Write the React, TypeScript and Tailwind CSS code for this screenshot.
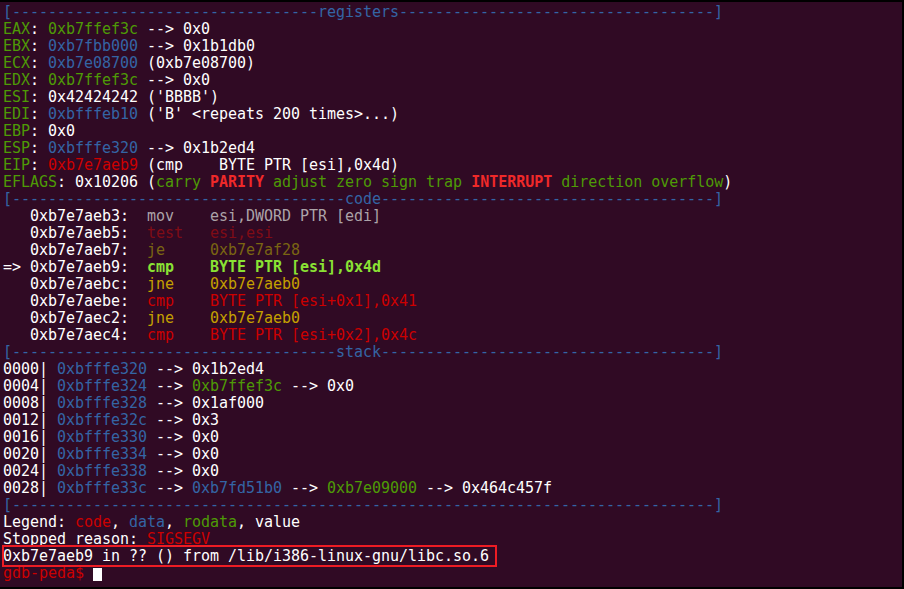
import React from "react";

type Seg = [string, string];

const W = "text-white";
const G = "text-[#4e9a06]";
const B = "text-[#3465a4]";
const R = "text-[#cc0000]";
const Y = "text-[#c4a000]";
const BR = "text-[#ef2929] font-bold";
const BG = "text-[#8ae234] font-bold";
const DW = "text-[#aca3a8]";
const DR = "text-[#800c16]";
const DY = "text-[#7a6512]";

const header = (t: string): Seg[] => {
  const total = 78 - t.length;
  const left = Math.floor(total / 2);
  const right = total - left;
  return [["[" + "-".repeat(left) + t + "-".repeat(right) + "]", B]];
};

const lines: Seg[][] = [
  header("registers"),
  [["EAX", G], [": ", W], ["0xb7ffef3c", G], [" --> 0x0", W]],
  [["EBX", G], [": ", W], ["0xb7fbb000", B], [" --> 0x1b1db0", W]],
  [["ECX", G], [": ", W], ["0xb7e08700", B], [" (0xb7e08700)", W]],
  [["EDX", G], [": ", W], ["0xb7ffef3c", G], [" --> 0x0", W]],
  [["ESI", G], [": 0x42424242 ('BBBB')", W]],
  [["EDI", G], [": ", W], ["0xbfffeb10", B], [" ('B' <repeats 200 times>...)", W]],
  [["EBP", G], [": 0x0", W]],
  [["ESP", G], [": ", W], ["0xbfffe320", B], [" --> 0x1b2ed4", W]],
  [["EIP", G], [": ", W], ["0xb7e7aeb9", R], [" (cmp    BYTE PTR [esi],0x4d)", W]],
  [
    ["EFLAGS", G],
    [": 0x10206 (", W],
    ["carry", G],
    [" ", W],
    ["PARITY", BR],
    [" ", W],
    ["adjust zero sign trap", G],
    [" ", W],
    ["INTERRUPT", BR],
    [" ", W],
    ["direction overflow", G],
    [")", W],
  ],
  header("code"),
  [["   0xb7e7aeb3:  ", W], ["mov    esi,DWORD PTR [edi]", DW]],
  [["   0xb7e7aeb5:  ", W], ["test   esi,esi", DR]],
  [["   0xb7e7aeb7:  ", W], ["je     0xb7e7af28", DY]],
  [["=> 0xb7e7aeb9:  ", W], ["cmp    BYTE PTR [esi],0x4d", BG]],
  [["   0xb7e7aebc:  ", W], ["jne    0xb7e7aeb0", Y]],
  [["   0xb7e7aebe:  ", W], ["cmp    BYTE PTR [esi+0x1],0x41", R]],
  [["   0xb7e7aec2:  ", W], ["jne    0xb7e7aeb0", Y]],
  [["   0xb7e7aec4:  ", W], ["cmp    BYTE PTR [esi+0x2],0x4c", R]],
  header("stack"),
  [["0000| ", W], ["0xbfffe320", B], [" --> 0x1b2ed4", W]],
  [["0004| ", W], ["0xbfffe324", B], [" --> ", W], ["0xb7ffef3c", G], [" --> 0x0", W]],
  [["0008| ", W], ["0xbfffe328", B], [" --> 0x1af000", W]],
  [["0012| ", W], ["0xbfffe32c", B], [" --> 0x3", W]],
  [["0016| ", W], ["0xbfffe330", B], [" --> 0x0", W]],
  [["0020| ", W], ["0xbfffe334", B], [" --> 0x0", W]],
  [["0024| ", W], ["0xbfffe338", B], [" --> 0x0", W]],
  [
    ["0028| ", W],
    ["0xbfffe33c", B],
    [" --> ", W],
    ["0xb7fd51b0", B],
    [" --> ", W],
    ["0xb7e09000", G],
    [" --> 0x464c457f", W],
  ],
  [["[" + "-".repeat(78) + "]", B]],
  [["Legend: ", W], ["code", R], [", ", W], ["data", B], [", ", W], ["rodata", G], [", value", W]],
  [["Stopped reason: ", W], ["SIGSEGV", R]],
];

function Line({ segs }: { segs: Seg[] }) {
  return (
    <div className="h-[17px] whitespace-pre">
      {segs.map(([t, c], i) => (
        <span key={i} className={c}>
          {t}
        </span>
      ))}
    </div>
  );
}

export default function App() {
  return (
    <div className="w-[904px] h-[589px] bg-black pt-[2px] overflow-hidden">
      <div
        className="w-[902px] h-[585px] bg-[#300a24] pl-[3px] pt-[1.5px] text-[15px] leading-[17px] tracking-[-0.03px] text-white"
        style={{ fontFamily: '"DejaVu Sans Mono", "Liberation Mono", monospace' }}
      >
        {lines.map((l, i) => (
          <Line key={i} segs={l} />
        ))}
        <div className="relative h-[17px] whitespace-pre">
          <span className="text-white">0xb7e7aeb9 in ?? () from /lib/i386-linux-gnu/libc.so.6</span>
          <span className="absolute left-[-1px] top-[-2.5px] w-[495px] h-[22px] border-2 border-[#ed1c24]" />
        </div>
        <div className="h-[17px] whitespace-pre flex items-center">
          <span className="text-[#cc0000]">gdb-peda$ </span>
          <span className="inline-block w-[9px] h-[13px] bg-white mt-[2px]" />
        </div>
      </div>
    </div>
  );
}
